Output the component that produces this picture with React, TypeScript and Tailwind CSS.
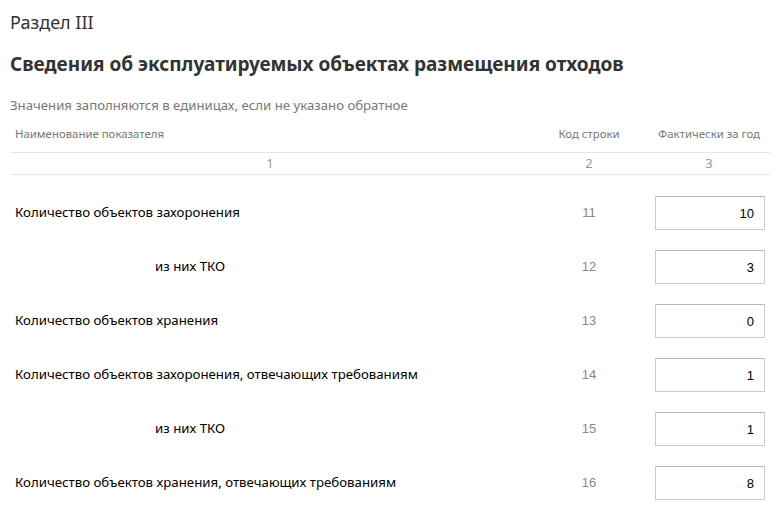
import React from "react";

const rows = [
  { name: "Количество объектов захоронения", code: "11", value: "10", sub: false },
  { name: "из них ТКО", code: "12", value: "3", sub: true },
  { name: "Количество объектов хранения", code: "13", value: "0", sub: false },
  { name: "Количество объектов захоронения, отвечающих требованиям", code: "14", value: "1", sub: false },
  { name: "из них ТКО", code: "15", value: "1", sub: true },
  { name: "Количество объектов хранения, отвечающих требованиям", code: "16", value: "8", sub: false },
];

const App = () => {
  return (
    <div
      className="w-[780px] h-[512px] bg-white overflow-hidden text-[#333]"
      style={{ fontFamily: '"Noto Sans", "Open Sans", sans-serif' }}
    >
      <div className="pl-[10px] pt-[9px] h-[40px] text-[18px] leading-[26px]">Раздел III</div>
      <h1 className="pl-[10px] pt-[11px] h-[76px] text-[19px] leading-[26px] font-bold text-[#333]">
        Сведения об эксплуатируемых объектах размещения отходов
      </h1>
      <div className="pl-[10px] h-[20px] text-[13.2px] leading-[18px] text-[#777] -mt-[20px]">
        Значения заполняются в единицах, если не указано обратное
      </div>

      <div className="ml-[10px] w-[760px] mt-[6px]">
        <div className="grid grid-cols-[520px_118px_122px] h-[31px] pt-[4px] items-start text-[11.4px] leading-[16px] text-[#777] border-b border-[#e5e5e5]">
          <div className="pl-[5px]">Наименование показателя</div>
          <div className="text-center">Код строки</div>
          <div className="text-center">Фактически за год</div>
        </div>
        <div className="grid grid-cols-[520px_118px_122px] h-[22px] items-center text-[13px] text-[#999] border-b border-[#e5e5e5]">
          <div className="text-center">1</div>
          <div className="text-center">2</div>
          <div className="text-center">3</div>
        </div>

        <div className="pt-[21px]">
          {rows.map((r) => (
            <div key={r.code} className="grid grid-cols-[520px_118px_122px] h-[54px] items-start">
              <div
                className={
                  "h-[34px] flex items-center text-[13.25px] text-black " +
                  (r.sub ? "pl-[145px]" : "pl-[5px]")
                }
              >
                {r.name}
              </div>
              <div
                className="h-[34px] flex items-center justify-center text-[13px] text-[#888]"
                style={{ fontFamily: '"Liberation Sans", Arial, sans-serif' }}
              >
                {r.code}
              </div>
              <div className="flex pl-[7px]">
                <input
                  readOnly
                  value={r.value}
                  className="w-[110px] h-[34px] border border-[#ccc] border-t-[#bbb] px-[10px] text-right text-[13px] text-black outline-none"
                  style={{ fontFamily: '"Liberation Sans", Arial, sans-serif' }}
                />
              </div>
            </div>
          ))}
        </div>
      </div>
    </div>
  );
};

export default App;
